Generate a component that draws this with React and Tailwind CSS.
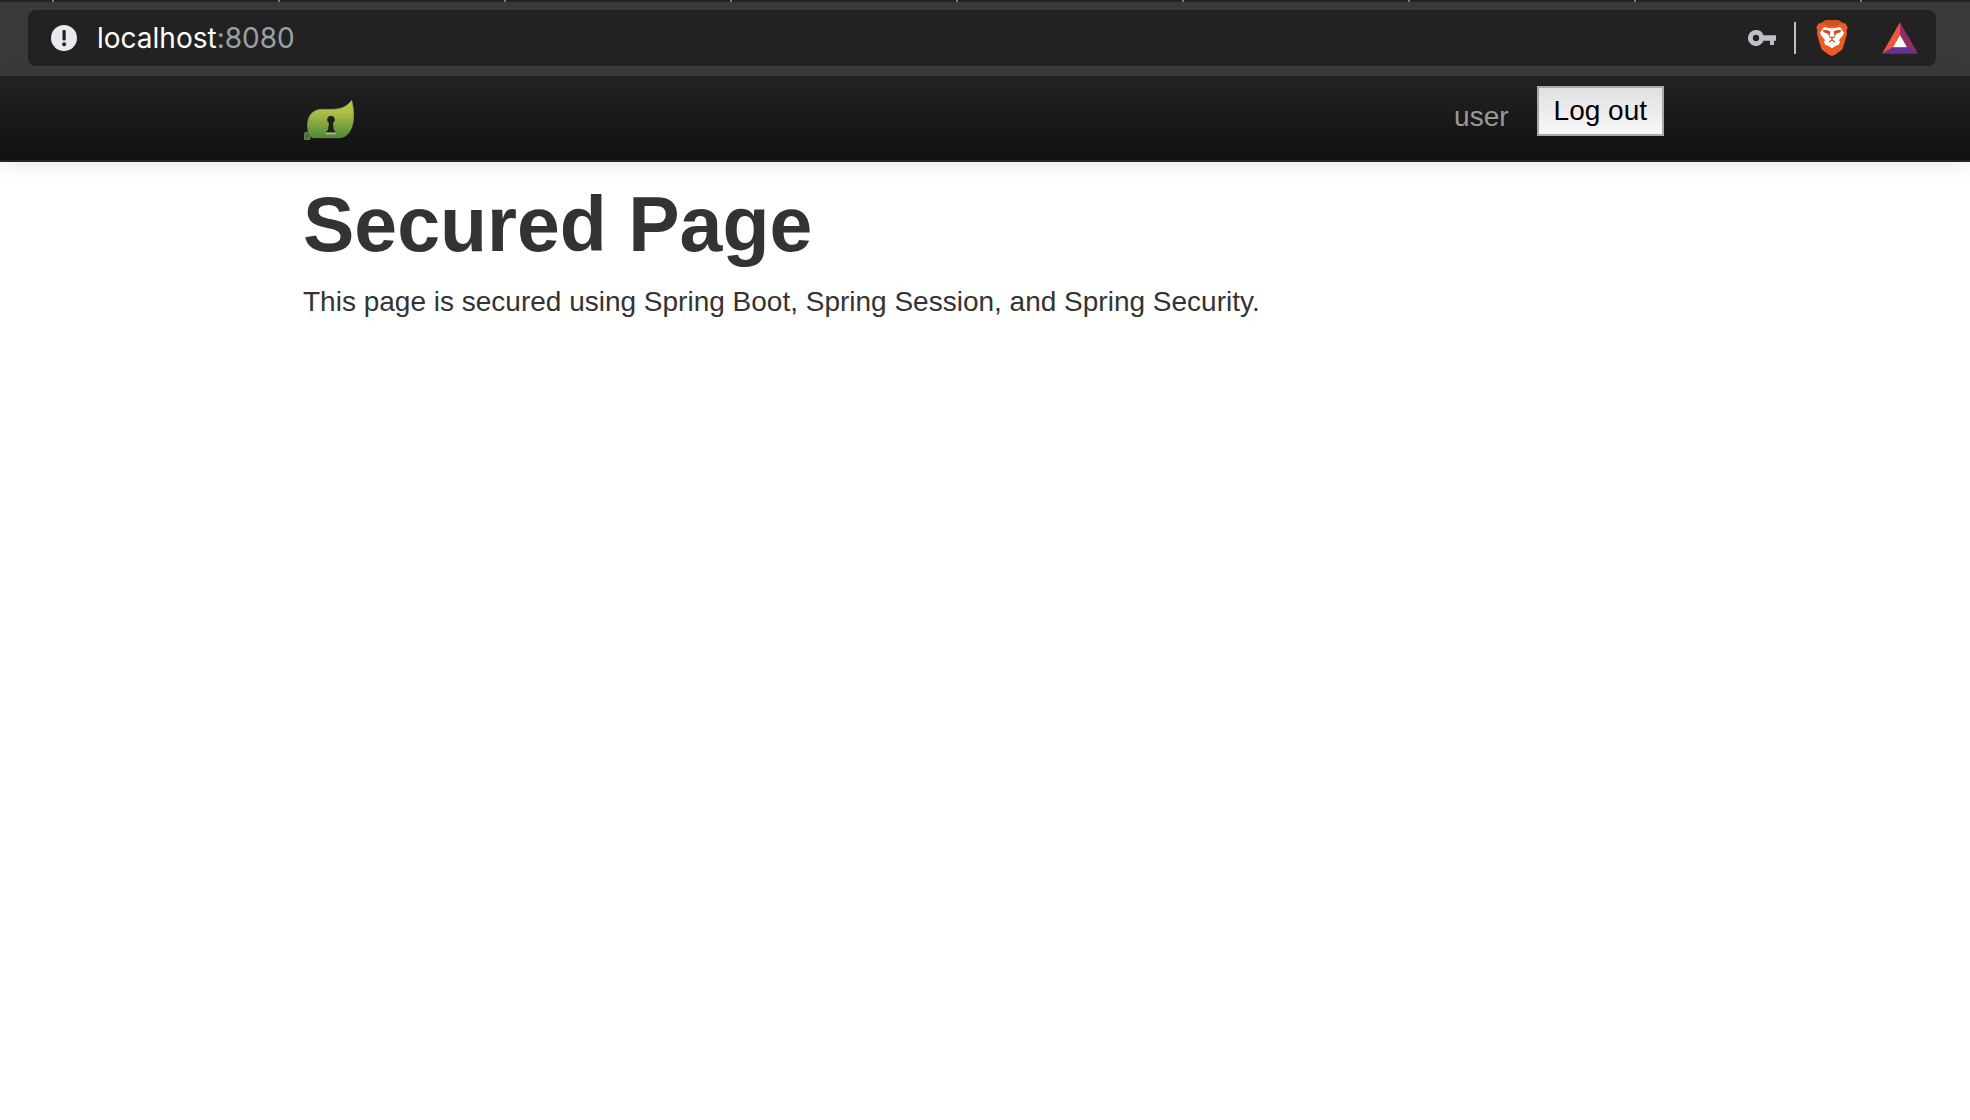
import React from "react";

function InfoIcon() {
  return (
    <svg viewBox="0 0 26 26" className="size-[26px]" aria-hidden="true">
      <circle cx="13" cy="13" r="13" fill="#e8eaed" />
      <rect x="11.5" y="5" width="3.2" height="10.5" rx="1" fill="#222" />
      <circle cx="13.1" cy="19.2" r="2" fill="#222" />
    </svg>
  );
}

function KeyIcon() {
  return (
    <svg viewBox="0 0 84 48" className="h-4 w-7" aria-hidden="true">
      <path
        fill="#bdc1c6"
        fillRule="evenodd"
        d="M24 0a24 24 0 1 0 22.5 32H66v13h12V32h6V16H46.500A24 24 0 0 0 24 0Zm0 14.500a9.500 9.500 0 1 1 0 19a9.500 9.500 0 0 1 0-19Z"
      />
    </svg>
  );
}

function LionIcon() {
  return (
    <svg viewBox="0 0 96 108" className="h-9 w-8" aria-hidden="true">
      <path fill="#ea5b26" d="M14 10 30 0h36l16 10 6 0 7 12-3 10 1 10-11 38c-2 7-5 10-9 13L56 105q-8 5-16 0L23 93c-4-3-7-6-9-13L3 42l1-10-3-10 7-12Z" />
      <path fill="#d4511f" d="M30 0h36l12 13q-8-2-13 3-17 3-34 0-5-5-13-3L30 0Z" />
      <path
        fill="#fff"
        d="m24 21 16 4h16l16-4 12 17-3 8-12 14 3 6-4 8-8 3-12-9-12 9-8-3-4-8 3-6-12-14-3-8 12-17ZM48 69l13 7-13 9-13-9Z"
      />
      <path fill="#c95328" d="m20 30 12 0 11 4-2 15-6-8-12-4ZM76 30H64l-11 4 2 15 6-8 12-4Z" />
      <path fill="none" stroke="#c95328" strokeWidth="4" d="m40 50 6 3h4l6-3M48 53v7l-9 6M48 60l9 6" />
    </svg>
  );
}

function TriangleIcon() {
  return (
    <svg viewBox="0 0 108 94" className="h-8 w-9" aria-hidden="true">
      <path fill="#f1563a" d="M54 0v38L33 75 0 94Z" />
      <path fill="#952d65" d="M54 0v38l21 37 33 19Z" />
      <path fill="#623393" d="M0 94 33 75h42l33 19Z" />
      <path fill="#fff" d="M54 38 33 75h42Z" />
    </svg>
  );
}

function LeafLogo() {
  return (
    <svg viewBox="0 0 150 120" className="h-10 w-[50px]" aria-hidden="true">
      <defs>
        <linearGradient id="leaf" x1="0" y1="0" x2="0" y2="1">
          <stop offset="0" stopColor="#c3ca4b" />
          <stop offset=".3" stopColor="#b0c045" />
          <stop offset="1" stopColor="#4f8a35" />
        </linearGradient>
      </defs>
      <path
        fill="url(#leaf)"
        stroke="#8a9070"
        strokeWidth="2"
        d="M143 1c9 34 9 67-4 90-8 15-19 22-35 22H27c-14-9-18-29-16-45 3-24 16-38 40-40h29c31 0 48-7 63-27Z"
      />
      <path fill="#417b32" stroke="#8a9070" strokeWidth="2" d="M1 100c4-5 15-5 18 1 2 5 1 13-2 18H1Z" />
      <path fill="#a8b0a0" d="M65 97h31v6H65Z" />
      <path fill="#1d1f1b" d="M81 47a12 12 0 0 1 6 22l2 20 7 8H65l7-8 3-20a12 12 0 0 1 6-22Z" />
    </svg>
  );
}

const tabs = [1, 2, 3, 4, 5, 6, 7, 8];

function BrowserBar() {
  return (
    <header className="bg-[#3a3a3a]">
      <div className="flex h-0.5 overflow-hidden bg-[#222]">
        <div className="w-[54px] shrink-0 border-r-2 border-[#777]" />
        {tabs.map((tab) => (
          <div key={tab} className="w-[226px] shrink-0 border-r-2 border-[#777]" />
        ))}
      </div>
      <div className="pt-2 pr-[34px] pb-2.5 pl-7">
        <div className="flex h-14 items-center rounded-lg bg-[#222] pr-[18px] pl-[23px]">
          <InfoIcon />
          <div className="ml-5 flex-1 font-[Inter,sans-serif] text-[28px] leading-8 text-white">
            localhost<span className="text-[#9aa0a6]">:8080</span>
          </div>
          <button type="button" aria-label="Passwords">
            <KeyIcon />
          </button>
          <div className="ml-[18px] h-8 w-0.5 bg-[#bdc1c6]" />
          <button type="button" aria-label="Shields" className="ml-5">
            <LionIcon />
          </button>
          <button type="button" aria-label="Rewards" className="ml-[34px]">
            <TriangleIcon />
          </button>
        </div>
      </div>
    </header>
  );
}

export default function App() {
  return (
    <div className="min-h-screen bg-white font-['Liberation_Sans',Arial,sans-serif] text-[28px] leading-10 text-[#333]">
      <BrowserBar />
      <nav className="border-b-2 border-[#252525] bg-linear-to-b from-[#222] to-[#111] shadow-[0_2px_20px_rgba(0,0,0,0.1)]">
        <div className="mx-auto flex h-[84px] max-w-[1362px] items-start justify-between">
          <a href="#" aria-label="Home" className="pt-6">
            <LeafLogo />
          </a>
          <div className="flex items-start pr-0.5">
            <p className="pt-[21px] text-[#999]">user</p>
            <button
              type="button"
              className="mt-2.5 ml-7 h-[50px] border-2 border-[#a9a9a9] bg-linear-to-b from-[#e0e0e0] to-[#f8f8f8] px-[15px] leading-[46px] text-black"
            >
              Log out
            </button>
          </div>
        </div>
      </nav>
      <main className="mx-auto max-w-[1364px] pt-[22px]">
        <h1 className="text-[77px] leading-20 font-bold">Secured Page</h1>
        <p className="pt-[18px]">This page is secured using Spring Boot, Spring Session, and Spring Security.</p>
      </main>
    </div>
  );
}
